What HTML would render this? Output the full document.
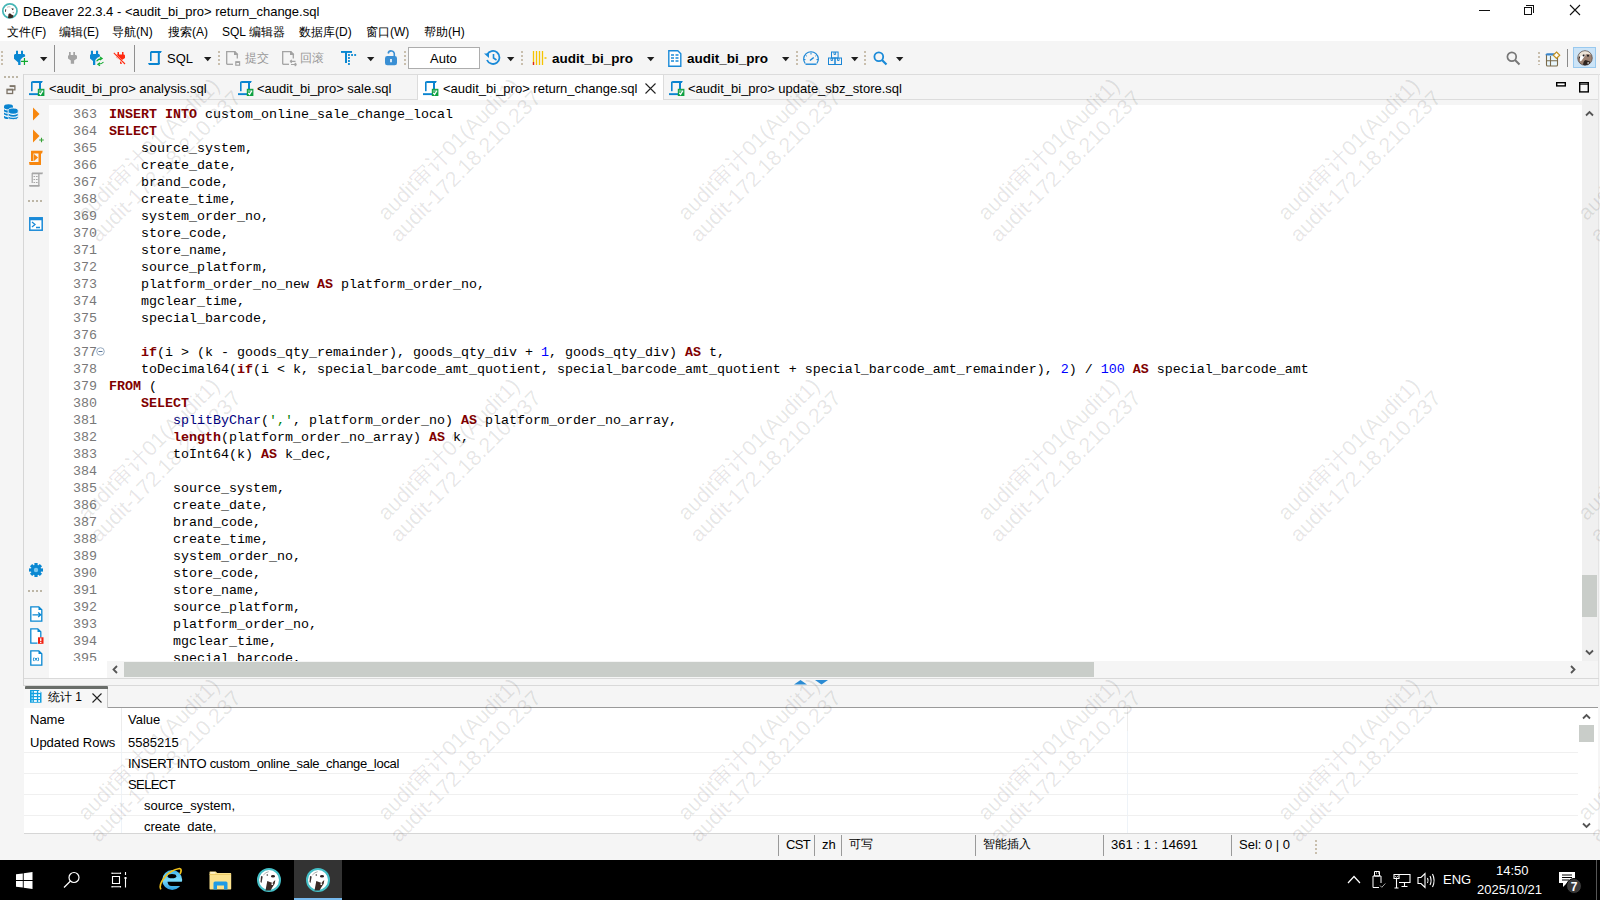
<!DOCTYPE html>
<html><head><meta charset="utf-8">
<style>
*{margin:0;padding:0;box-sizing:border-box}
html,body{width:1600px;height:900px;overflow:hidden;background:#fff;font-family:"Liberation Sans",sans-serif;font-size:12px;color:#000}
.a{position:absolute}
.t{position:absolute;white-space:pre;line-height:1}
svg{position:absolute;overflow:visible}
#code .l{position:absolute;left:0;height:17px;line-height:17px;white-space:pre;font-family:"Liberation Mono",monospace;font-size:13.33px;color:#000}
#code .n{position:absolute;left:0;width:97px;height:17px;line-height:17px;text-align:right;white-space:pre;font-family:"Liberation Mono",monospace;font-size:13.33px;color:#787878}
.k{color:#800000;font-weight:bold}
.f{color:#000080}
.s{color:#008000}
.d{color:#0000ff}
.grip{position:absolute;width:2px;background:repeating-linear-gradient(to bottom,#c9bfae 0 2px,transparent 2px 4px)}
.sep{position:absolute;width:1px;background:#8f8f8f}
.tri{position:absolute;width:0;height:0;border-left:4px solid transparent;border-right:4px solid transparent;border-top:4.5px solid #222}
</style></head><body>
<!-- title bar -->
<div class="a" style="left:0;top:0;width:1600px;height:41px;background:#fff"></div>
<!-- toolbar -->
<div class="a" style="left:0;top:41px;width:1600px;height:33px;background:#f5f5f5"></div>
<!-- main area bg -->
<div class="a" style="left:0;top:74px;width:1600px;height:786px;background:#f5f5f5"></div>

<!-- TITLE -->
<svg style="left:0px;top:1px" width="20" height="20" viewBox="0 0 20 20">
<circle cx="9.9" cy="9.9" r="7.1" fill="#fff" stroke="#47b6b6" stroke-width="1.7"/>
<path d="M8 17 L8.5 13 L10 12.2 L11.5 13.5 L13.5 14.5 L13 16.5 Q10.5 17.6 8 17z" fill="#3b2a22"/>
<path d="M11.3 7.3 L14 7.7 L12.6 9.2z" fill="#2e2420"/>
<path d="M5 8.5 L6.3 8.2 L5.8 11 L5.2 11z" fill="#4a3a34"/>
<path d="M7 6.3 Q9 5.3 10.5 6" stroke="#b8b0aa" stroke-width="0.8" fill="none"/>
<path d="M12.6 11.5 L13.8 10.8 L13.2 12.5z" fill="#6a5a54"/>
</svg>
<div class="t" style="left:23px;top:5px;font-size:13px">DBeaver 22.3.4 - &lt;audit_bi_pro&gt; return_change.sql</div>
<div class="a" style="left:1479px;top:10px;width:11px;height:1px;background:#111"></div>
<div class="a" style="left:1524px;top:7px;width:8px;height:8px;border:1px solid #111"></div>
<div class="a" style="left:1526px;top:5px;width:8px;height:8px;border-top:1px solid #111;border-right:1px solid #111"></div>
<svg style="left:1569px;top:4px" width="12" height="12" viewBox="0 0 12 12"><path d="M1 1L11 11M11 1L1 11" stroke="#111" stroke-width="1.1"/></svg>
<!-- MENU -->
<div class="t" style="left:7px;top:26px">文件(F)</div>
<div class="t" style="left:59px;top:26px">编辑(E)</div>
<div class="t" style="left:112px;top:26px">导航(N)</div>
<div class="t" style="left:168px;top:26px">搜索(A)</div>
<div class="t" style="left:222px;top:26px">SQL 编辑器</div>
<div class="t" style="left:299px;top:26px">数据库(D)</div>
<div class="t" style="left:366px;top:26px">窗口(W)</div>
<div class="t" style="left:424px;top:26px">帮助(H)</div>

<!-- TOOLBAR -->
<div class="grip" style="left:1px;top:51px;height:15px"></div>
<svg style="left:10px;top:46px" width="20" height="20" viewBox="0 0 20 20">
<path d="M6 4.8h2V8h3V4.8h2V8h1.2l0.9 0.9v1.6q-2.6 0.6-4.6 3.2V19H8.2v-2.6L4 12.8V8.9L4.9 8H6z" fill="#0a88d2"/>
<path d="M11 15.4h7M14.45 12v7" stroke="#10aa30" stroke-width="1.2"/>
</svg>
<svg style="left:40px;top:57px" width="8" height="5" viewBox="0 0 8 5"><path d="M0 0h7.4L3.7 4.2z" fill="#1e1e1e"/></svg>
<div class="sep" style="left:54px;top:45px;height:27px"></div>
<svg style="left:62px;top:46px" width="20" height="20" viewBox="0 0 20 20">
<path d="M7 6h1.7v3h2.6V6H13v3h1.1L15 9.9v2.6l-2.9 1.9v3.3H8.8v-3.3L6 12.5V9.9L6.9 9H7z" fill="#a3a3a3"/>
</svg>
<svg style="left:88px;top:46px" width="22" height="20" viewBox="0 0 22 20">
<path d="M2.9 4.8h2.1V8h3V4.8h2.1V8h0.9l0.9 1v1.5q-2.8 0.6-4.6 3.5V19H5v-4l-3-2.6V9L2.9 8z" fill="#0a88d2"/>
<path d="M8.6 15.2q1.5-2.5 5.5-2.6M12 11l2.2 1.5-2.2 1.6M15.5 16q-1.5 2-5.5 2.2M12 19.8l-2.2-1.6 2.2-1.5" stroke="#10aa30" stroke-width="1.1" fill="none"/>
</svg>
<svg style="left:112px;top:46px" width="20" height="20" viewBox="0 0 20 20">
<path d="M5.5 6h1.5v2.5h3V6h1.5v2.5h0.7l0.8 0.9V12l-3 2v3.7H8v-3.7L4 11.5V9.4L4.8 8.5h0.7z" fill="#ff2a10"/>
<path d="M2 7.5l10 10" stroke="#f7f7f7" stroke-width="2.2"/>
<path d="M1.8 6.8L13 18" stroke="#ff2a10" stroke-width="1.1"/>
</svg>
<div class="sep" style="left:134px;top:45px;height:27px"></div>
<svg style="left:148px;top:50px" width="16" height="16" viewBox="0 0 16 16" fill="#0a84d0">
<path d="M3 1h10.8l-1 1.9H3z"/><rect x="2" y="1.6" width="1.6" height="9.4"/><rect x="9.8" y="1.5" width="2" height="12.5"/><path d="M0 13h11.8v0.5q0 1.5-1.5 1.5H1z"/>
</svg>
<div class="t" style="left:167px;top:52px;font-size:13px">SQL</div>
<svg style="left:204px;top:57px" width="8" height="5" viewBox="0 0 8 5"><path d="M0 0h7.4L3.7 4.2z" fill="#1e1e1e"/></svg>
<div class="grip" style="left:218px;top:51px;height:15px"></div>
<svg style="left:222px;top:46px" width="20" height="20" viewBox="0 0 20 20">
<path d="M4.7 18.3V5.6h8v2.8h2.6v4" stroke="#a3a3a3" stroke-width="1.3" fill="none"/><path d="M4.7 18.3h6.3" stroke="#a3a3a3" stroke-width="1.3"/>
<path d="M12.3 5h0.8l3 3v0.9h-3.8z" fill="#a3a3a3"/>
<rect x="13.8" y="15.8" width="3.8" height="3.4" stroke="#a3a3a3" stroke-width="1.2" fill="none"/><path d="M13.8 16.3h3.8" stroke="#a3a3a3" stroke-width="1.4"/>
</svg>
<div class="t" style="left:245px;top:52px;font-size:12px;color:#999">提交</div>
<svg style="left:278px;top:46px" width="20" height="20" viewBox="0 0 20 20">
<path d="M4.7 18.3V5.6h8v2.8h2.6v4" stroke="#a3a3a3" stroke-width="1.3" fill="none"/><path d="M4.7 18.3h6.3" stroke="#a3a3a3" stroke-width="1.3"/>
<path d="M12.3 5h0.8l3 3v0.9h-3.8z" fill="#a3a3a3"/>
<path d="M12.5 15.4h5M12 15.4l1.8-1.5M12 15.4l1.8 1.5M13 18.5h5M18.5 18.5l-1.8-1.5M18.5 18.5l-1.8 1.5" stroke="#a3a3a3" stroke-width="1.1" fill="none"/>
</svg>
<div class="t" style="left:300px;top:52px;font-size:12px;color:#999">回滚</div>
<svg style="left:336px;top:46px" width="24" height="22" viewBox="0 0 24 22" fill="#0a88d2">
<rect x="5" y="5" width="11" height="1.9"/><rect x="9" y="5" width="2" height="12"/>
<rect x="12" y="8.1" width="1.9" height="1.8"/><rect x="15.1" y="8.1" width="1.9" height="1.8"/><rect x="18.2" y="8.1" width="1.9" height="1.8"/>
<rect x="12" y="11.1" width="1.9" height="1.8"/><rect x="12" y="14.1" width="1.9" height="1.8"/><rect x="12" y="17.1" width="1.9" height="1.8"/>
</svg>
<svg style="left:367px;top:57px" width="8" height="5" viewBox="0 0 8 5"><path d="M0 0h7.4L3.7 4.2z" fill="#1e1e1e"/></svg>
<svg style="left:384px;top:50px" width="14" height="16" viewBox="0 0 14 16">
<path d="M4.2 3.5A3 3 0 0 1 10.3 4.5V7" stroke="#3a8fd4" stroke-width="1.6" fill="none"/>
<rect x="1" y="6" width="12" height="9.2" rx="2.3" fill="#3a8fd4"/><path d="M7 9v3.3" stroke="#fff" stroke-width="1.6"/>
</svg>
<div class="grip" style="left:404px;top:51px;height:15px"></div>
<div class="a" style="left:408px;top:47px;width:72px;height:22px;background:#fff;border:1px solid #adadad"></div>
<div class="t" style="left:430px;top:52px;font-size:13px">Auto</div>
<svg style="left:484px;top:49px" width="17" height="17" viewBox="0 0 17 17">
<path d="M3.2 5.5A6.5 6.5 0 1 1 3 11" stroke="#1a8ad8" stroke-width="1.8" fill="none"/><path d="M0 4.5h5v4.5z" fill="#1a8ad8"/><path d="M9.5 5v4l3 2" stroke="#1a8ad8" stroke-width="1.6" fill="none"/>
</svg>
<svg style="left:507px;top:57px" width="8" height="5" viewBox="0 0 8 5"><path d="M0 0h7.4L3.7 4.2z" fill="#1e1e1e"/></svg>
<div class="grip" style="left:521px;top:51px;height:15px"></div>
<svg style="left:532px;top:50px" width="16" height="16" viewBox="0 0 16 16">
<path d="M1.5 1v14M4.5 1v14M7.5 1v14M10.5 1v14" stroke="#f5c400" stroke-width="1.3"/><path d="M1.5 12v3" stroke="#e02020" stroke-width="1.3"/><path d="M12.5 8h2" stroke="#f5c400" stroke-width="1.5"/>
</svg>
<div class="t" style="left:552px;top:52px;font-size:13.5px;font-weight:bold">audit_bi_pro</div>
<svg style="left:647px;top:57px" width="8" height="5" viewBox="0 0 8 5"><path d="M0 0h7.4L3.7 4.2z" fill="#1e1e1e"/></svg>
<svg style="left:668px;top:50px" width="14" height="17" viewBox="0 0 14 17">
<path d="M0.8 0.8h9l3 3v12.4H0.8z" stroke="#1a8ad8" stroke-width="1.4" fill="#fff"/><path d="M3 5h3M7.5 5h3M3 8h3M7.5 8h3M3 11h3M7.5 11h3" stroke="#1a8ad8" stroke-width="1.5"/>
</svg>
<div class="t" style="left:687px;top:52px;font-size:13.5px;font-weight:bold">audit_bi_pro</div>
<svg style="left:782px;top:57px" width="8" height="5" viewBox="0 0 8 5"><path d="M0 0h7.4L3.7 4.2z" fill="#1e1e1e"/></svg>
<div class="grip" style="left:796px;top:51px;height:15px"></div>
<svg style="left:802px;top:50px" width="18" height="16" viewBox="0 0 18 16">
<path d="M3.2 13.5A7.3 7.3 0 1 1 14.8 13.5" stroke="#1a86d6" stroke-width="1.2" fill="none"/>
<path d="M3.5 14.2h11" stroke="#1a86d6" stroke-width="1.4"/>
<path d="M9 2.5v2M3.5 5l1.3 1.2M14.5 5l-1.2 1.2M1.5 9.6h2M14.5 9.6h2" stroke="#1a86d6" stroke-width="1"/>
<path d="M8 10.5l3.7-3" stroke="#1a86d6" stroke-width="1.5"/>
</svg>
<svg style="left:827px;top:51px" width="16" height="15" viewBox="0 0 16 15">
<rect x="4.5" y="1" width="6.6" height="6" stroke="#1a86d6" stroke-width="1" fill="none"/>
<rect x="1.5" y="7" width="6.5" height="6.5" stroke="#1a86d6" stroke-width="1" fill="none"/>
<rect x="8" y="7" width="6.5" height="6.5" stroke="#1a86d6" stroke-width="1" fill="none"/>
<path d="M7 1v2.5h1.6V1M4 7v2.5h1.6V7M10.5 7v2.5h1.6V7" stroke="#1a86d6" stroke-width="0.9" fill="none"/>
</svg>
<svg style="left:851px;top:57px" width="8" height="5" viewBox="0 0 8 5"><path d="M0 0h7.4L3.7 4.2z" fill="#1e1e1e"/></svg>
<div class="grip" style="left:864px;top:51px;height:15px"></div>
<svg style="left:873px;top:51px" width="15" height="15" viewBox="0 0 15 15">
<circle cx="5.8" cy="5.8" r="4.4" stroke="#1a8ad8" stroke-width="1.8" fill="none"/><path d="M9 9l4.5 4.5" stroke="#1a8ad8" stroke-width="2.2"/>
</svg>
<svg style="left:896px;top:57px" width="8" height="5" viewBox="0 0 8 5"><path d="M0 0h7.4L3.7 4.2z" fill="#1e1e1e"/></svg>
<!-- right toolbar -->
<svg style="left:1506px;top:51px" width="15" height="15" viewBox="0 0 15 15">
<circle cx="5.8" cy="5.8" r="4.4" stroke="#777" stroke-width="1.7" fill="none"/><path d="M9 9l4.5 4.5" stroke="#777" stroke-width="1.9"/>
</svg>
<div class="grip" style="left:1538px;top:52px;height:13px"></div>
<svg style="left:1545px;top:51px" width="16" height="17" viewBox="0 0 16 17">
<rect x="1.5" y="3.5" width="11" height="11.5" rx="1" fill="#e8f6fc" stroke="#7a6a4a" stroke-width="1.1"/>
<path d="M1.5 4.3q0-1 1-1h8" stroke="#3a86cc" stroke-width="2.2" fill="none"/>
<path d="M5.5 5v10M1.5 9.7h11" stroke="#7a6a4a" stroke-width="1.1"/>
<path d="M11.5 1l3.2 3.2-3.2 3.2-3.2-3.2z" fill="#fff6d8" stroke="#c09020" stroke-width="1.2"/>
<path d="M11.5 2.5v3.4M9.8 4.2h3.4" stroke="#fff" stroke-width="0.8"/>
</svg>
<div class="sep" style="left:1567px;top:49px;height:18px;background:#8a8a8a"></div>
<div class="a" style="left:1573px;top:47px;width:23px;height:21px;background:#cce4f7;border:1px solid #99c9ef"></div>
<svg style="left:1577px;top:50px" width="16" height="16" viewBox="0 0 16 16">
<defs><clipPath id="avc"><circle cx="8" cy="8" r="7.3"/></clipPath></defs>
<g clip-path="url(#avc)">
<rect x="0" y="0" width="16" height="16" fill="#9c8272"/>
<path d="M0 0h16v5.5q-4-2.5-9-1L2 8 0 9z" fill="#ece4d8"/>
<path d="M3 7q2.5-3 6-2.5L5 10q-1 2-2 1z" fill="#fff"/>
<circle cx="6.6" cy="5.6" r="1" fill="#1a1a1a"/><circle cx="11" cy="5.8" r="1" fill="#1a1a1a"/>
<path d="M2 5.5l1.2 2.5-1.8 0.5z" fill="#2a2020"/>
<path d="M6 16q0-5 2.5-6l4.5 1.5L12 16z" fill="#2e241f"/>
<path d="M10.5 12.3h1.3v1.4h-1.3z" fill="#fff"/>
</g>
<circle cx="8" cy="8" r="7.3" fill="none" stroke="#3a3030" stroke-width="0.6"/>
</svg>

<!-- LEFT PANEL -->
<div class="a" style="left:23px;top:74px;width:1px;height:612px;background:#d6d6d6"></div>
<div class="a" style="left:4px;top:76px;width:14px;height:2px;background:repeating-linear-gradient(to right,#bdb6a6 0 2px,transparent 2px 4px)"></div>
<svg style="left:6px;top:85px" width="10" height="10" viewBox="0 0 10 10" fill="none" stroke="#7d7468">
<path d="M3.7 0.8h5.2v4h-2" stroke-width="1.3"/><path d="M3.7 1.3h5.2" stroke-width="1.5"/><rect x="1" y="4.3" width="5.6" height="4.2" stroke-width="1.3"/><path d="M1 4.8h5.6" stroke-width="1.5"/>
</svg>
<svg style="left:3px;top:103px" width="16" height="17" viewBox="0 0 16 17">
<path d="M1 3.5q0-2.2 4.5-2.2t4.5 2.2v11q0 1.5-4.5 1.5T1 14.5z" fill="#0a84d0"/>
<path d="M1 5.6q1.5 1.4 4.5 1.4M1 8.8q1.5 1.4 4.5 1.4M1 12q1.5 1.4 4.5 1.4" stroke="#fff" stroke-width="1.1" fill="none"/>
<path d="M5.2 7.5q0-2.5 5-2.5t5 2.5v7.3q0 1.9-5 1.9t-5-1.9z" fill="#0a84d0" stroke="#f5f5f5" stroke-width="0.9"/>
<path d="M5.5 9.9q1.5 1.5 4.7 1.5t4.8-1.5M5.5 12.8q1.5 1.5 4.7 1.5t4.8-1.5" stroke="#fff" stroke-width="1.1" fill="none"/>
</svg>
<!-- TAB STRIP -->
<div class="a" style="left:24px;top:74px;width:1576px;height:1px;background:#dcdcdc"></div>
<div class="a" style="left:24px;top:99px;width:1575px;height:1px;background:#dcdcdc"></div>
<div class="a" style="left:1598px;top:74px;width:1px;height:612px;background:#e4e4e4"></div>
<div class="a" style="left:417px;top:75px;width:247px;height:25px;background:#fff;border-left:1px solid #dcdcdc;border-right:1px solid #dcdcdc"></div>
<svg style="left:28px;top:80px" width="17" height="17" viewBox="0 0 17 17" fill="#0a84d0">
<path d="M4.2 1h10.6l-1 1.9H4.2z"/><rect x="3" y="1.6" width="1.6" height="9.6"/><rect x="11" y="1.5" width="2" height="8"/><rect x="1" y="13.2" width="9" height="1.9"/>
<rect x="9.8" y="8.8" width="6.6" height="7.2" fill="#0ea040"/><rect x="10.8" y="9.8" width="4.6" height="2.6" fill="#5cbf80"/><path d="M11.3 13l1.3 1.4 2.2-3.6" stroke="#fff" stroke-width="1.2" fill="none"/>
</svg>
<div class="t" style="left:49px;top:82px;font-size:13px">&lt;audit_bi_pro&gt; analysis.sql</div>
<svg style="left:237px;top:80px" width="17" height="17" viewBox="0 0 17 17" fill="#0a84d0">
<path d="M4.2 1h10.6l-1 1.9H4.2z"/><rect x="3" y="1.6" width="1.6" height="9.6"/><rect x="11" y="1.5" width="2" height="8"/><rect x="1" y="13.2" width="9" height="1.9"/>
<rect x="9.8" y="8.8" width="6.6" height="7.2" fill="#0ea040"/><rect x="10.8" y="9.8" width="4.6" height="2.6" fill="#5cbf80"/><path d="M11.3 13l1.3 1.4 2.2-3.6" stroke="#fff" stroke-width="1.2" fill="none"/>
</svg>
<div class="t" style="left:257px;top:82px;font-size:13px">&lt;audit_bi_pro&gt; sale.sql</div>
<svg style="left:422px;top:80px" width="17" height="17" viewBox="0 0 17 17" fill="#0a84d0">
<path d="M4.2 1h10.6l-1 1.9H4.2z"/><rect x="3" y="1.6" width="1.6" height="9.6"/><rect x="11" y="1.5" width="2" height="8"/><rect x="1" y="13.2" width="9" height="1.9"/>
<rect x="9.8" y="8.8" width="6.6" height="7.2" fill="#0ea040"/><rect x="10.8" y="9.8" width="4.6" height="2.6" fill="#5cbf80"/><path d="M11.3 13l1.3 1.4 2.2-3.6" stroke="#fff" stroke-width="1.2" fill="none"/>
</svg>
<div class="t" style="left:443px;top:82px;font-size:13px">&lt;audit_bi_pro&gt; return_change.sql</div>
<svg style="left:645px;top:83px" width="11" height="11" viewBox="0 0 11 11"><path d="M0.5 0.5L10.5 10.5M10.5 0.5L0.5 10.5" stroke="#222" stroke-width="1.1"/></svg>
<svg style="left:668px;top:80px" width="17" height="17" viewBox="0 0 17 17" fill="#0a84d0">
<path d="M4.2 1h10.6l-1 1.9H4.2z"/><rect x="3" y="1.6" width="1.6" height="9.6"/><rect x="11" y="1.5" width="2" height="8"/><rect x="1" y="13.2" width="9" height="1.9"/>
<rect x="9.8" y="8.8" width="6.6" height="7.2" fill="#0ea040"/><rect x="10.8" y="9.8" width="4.6" height="2.6" fill="#5cbf80"/><path d="M11.3 13l1.3 1.4 2.2-3.6" stroke="#fff" stroke-width="1.2" fill="none"/>
</svg>
<div class="t" style="left:688px;top:82px;font-size:13px">&lt;audit_bi_pro&gt; update_sbz_store.sql</div>
<svg style="left:1555px;top:81px" width="12" height="7" viewBox="0 0 12 7"><rect x="1.7" y="1.7" width="8.6" height="3.2" stroke="#000" stroke-width="1.4" fill="#fff"/></svg>
<svg style="left:1578px;top:81px" width="12" height="13" viewBox="0 0 12 13"><rect x="1.7" y="1.7" width="8.6" height="9.2" stroke="#000" stroke-width="1.4" fill="#f5f5f5"/><path d="M1.7 3.2h8.6" stroke="#000" stroke-width="1"/></svg>
<!-- EDITOR -->
<div class="a" style="left:49px;top:105px;width:1533px;height:572px;background:#fff"></div>
<div class="a" style="left:24px;top:100px;width:25px;height:578px;background:#f5f5f5"></div>
<div id="code" class="a" style="left:0;top:106px;width:1582px;height:555px;overflow:hidden">
<div class="n" style="top:0px">363</div><div class="l" style="left:109px;top:0px"><span class="k">INSERT</span> <span class="k">INTO</span> custom_online_sale_change_local</div>
<div class="n" style="top:17px">364</div><div class="l" style="left:109px;top:17px"><span class="k">SELECT</span></div>
<div class="n" style="top:34px">365</div><div class="l" style="left:109px;top:34px">    source_system,</div>
<div class="n" style="top:51px">366</div><div class="l" style="left:109px;top:51px">    create_date,</div>
<div class="n" style="top:68px">367</div><div class="l" style="left:109px;top:68px">    brand_code,</div>
<div class="n" style="top:85px">368</div><div class="l" style="left:109px;top:85px">    create_time,</div>
<div class="n" style="top:102px">369</div><div class="l" style="left:109px;top:102px">    system_order_no,</div>
<div class="n" style="top:119px">370</div><div class="l" style="left:109px;top:119px">    store_code,</div>
<div class="n" style="top:136px">371</div><div class="l" style="left:109px;top:136px">    store_name,</div>
<div class="n" style="top:153px">372</div><div class="l" style="left:109px;top:153px">    source_platform,</div>
<div class="n" style="top:170px">373</div><div class="l" style="left:109px;top:170px">    platform_order_no_new <span class="k">AS</span> platform_order_no,</div>
<div class="n" style="top:187px">374</div><div class="l" style="left:109px;top:187px">    mgclear_time,</div>
<div class="n" style="top:204px">375</div><div class="l" style="left:109px;top:204px">    special_barcode,</div>
<div class="n" style="top:221px">376</div><div class="l" style="left:109px;top:221px"></div>
<div class="n" style="top:238px">377</div><div class="l" style="left:109px;top:238px">    <span class="k">if</span>(i &gt; (k - goods_qty_remainder), goods_qty_div + <span class="d">1</span>, goods_qty_div) <span class="k">AS</span> t,</div>
<div class="n" style="top:255px">378</div><div class="l" style="left:109px;top:255px">    toDecimal64(<span class="k">if</span>(i &lt; k, special_barcode_amt_quotient, special_barcode_amt_quotient + special_barcode_amt_remainder), <span class="d">2</span>) / <span class="d">100</span> <span class="k">AS</span> special_barcode_amt</div>
<div class="n" style="top:272px">379</div><div class="l" style="left:109px;top:272px"><span class="k">FROM</span> (</div>
<div class="n" style="top:289px">380</div><div class="l" style="left:109px;top:289px">    <span class="k">SELECT</span></div>
<div class="n" style="top:306px">381</div><div class="l" style="left:109px;top:306px">        <span class="f">splitByChar</span>(<span class="s">','</span>, platform_order_no) <span class="k">AS</span> platform_order_no_array,</div>
<div class="n" style="top:323px">382</div><div class="l" style="left:109px;top:323px">        <span class="k">length</span>(platform_order_no_array) <span class="k">AS</span> k,</div>
<div class="n" style="top:340px">383</div><div class="l" style="left:109px;top:340px">        toInt64(k) <span class="k">AS</span> k_dec,</div>
<div class="n" style="top:357px">384</div><div class="l" style="left:109px;top:357px"></div>
<div class="n" style="top:374px">385</div><div class="l" style="left:109px;top:374px">        source_system,</div>
<div class="n" style="top:391px">386</div><div class="l" style="left:109px;top:391px">        create_date,</div>
<div class="n" style="top:408px">387</div><div class="l" style="left:109px;top:408px">        brand_code,</div>
<div class="n" style="top:425px">388</div><div class="l" style="left:109px;top:425px">        create_time,</div>
<div class="n" style="top:442px">389</div><div class="l" style="left:109px;top:442px">        system_order_no,</div>
<div class="n" style="top:459px">390</div><div class="l" style="left:109px;top:459px">        store_code,</div>
<div class="n" style="top:476px">391</div><div class="l" style="left:109px;top:476px">        store_name,</div>
<div class="n" style="top:493px">392</div><div class="l" style="left:109px;top:493px">        source_platform,</div>
<div class="n" style="top:510px">393</div><div class="l" style="left:109px;top:510px">        platform_order_no,</div>
<div class="n" style="top:527px">394</div><div class="l" style="left:109px;top:527px">        mgclear_time,</div>
<div class="n" style="top:544px">395</div><div class="l" style="left:109px;top:544px">        special_barcode,</div>
</div>
<svg style="left:96px;top:347px" width="9" height="9" viewBox="0 0 9 9"><circle cx="4.5" cy="4.5" r="3.8" stroke="#8aa0b8" fill="#fff" stroke-width="0.9"/><path d="M2.5 4.5h4" stroke="#4a6a90" stroke-width="0.9"/></svg>

<!-- EDITOR LEFT RULER ICONS -->
<svg style="left:32px;top:107px" width="8" height="14" viewBox="0 0 8 14"><path d="M1 0.5L7.5 7 1 13.5z" fill="#f7870f"/></svg>
<svg style="left:32px;top:129px" width="12" height="14" viewBox="0 0 12 14"><path d="M1 0.5L7.5 7 1 13.5z" fill="#f7870f"/><path d="M7.2 11h4.6M9.5 8.7v4.6" stroke="#3aa33a" stroke-width="1.1"/></svg>
<svg style="left:28px;top:150px" width="16" height="16" viewBox="0 0 16 16" fill="#f7870f">
<path d="M3.2 0.8h11.5l-0.6 2.8H3.2z"/><rect x="3" y="1" width="2.5" height="10"/><rect x="10.5" y="1" width="2.5" height="13.5"/><path d="M1 12h10.5l1.5 2.5v0.5H1.5z"/><path d="M6 4l4 3.5-4 3.5z"/>
</svg>
<svg style="left:28px;top:172px" width="16" height="16" viewBox="0 0 16 16" fill="#a6a6a6">
<path d="M4 0.6h11l-0.6 1.6H4z"/><rect x="3.6" y="1" width="1.2" height="10"/><rect x="10.2" y="1" width="1.3" height="13"/><path d="M1 13h10.5v1.8H1.5z"/>
<rect x="5.5" y="4" width="1.6" height="1"/><rect x="8" y="4" width="1.6" height="1"/><rect x="5.5" y="7" width="1.6" height="1"/><rect x="8" y="7" width="1.6" height="1"/><rect x="5.5" y="10" width="1.6" height="1"/><rect x="8" y="10" width="1.6" height="1"/>
</svg>
<div class="a" style="left:28px;top:200px;width:14px;height:2px;background:repeating-linear-gradient(to right,#bdb6a6 0 2px,transparent 2px 4px)"></div>
<svg style="left:29px;top:217px" width="14" height="14" viewBox="0 0 14 14"><rect x="0.8" y="0.8" width="12.4" height="12.4" stroke="#1a8ad8" stroke-width="1.5" fill="#fff"/><path d="M0.8 2h12.4" stroke="#1a8ad8" stroke-width="2.5"/><path d="M3 5l3 2.5-3 2.5M7 10.5h4" stroke="#1a8ad8" stroke-width="1.3" fill="none"/></svg>
<svg style="left:28px;top:562px" width="16" height="16" viewBox="-8 -8 16 16" fill="#0a88d2">
<rect x="-1.6" y="-7" width="3.2" height="3" transform="rotate(0)"/><rect x="-1.6" y="-7" width="3.2" height="3" transform="rotate(45)"/><rect x="-1.6" y="-7" width="3.2" height="3" transform="rotate(90)"/><rect x="-1.6" y="-7" width="3.2" height="3" transform="rotate(135)"/><rect x="-1.6" y="-7" width="3.2" height="3" transform="rotate(180)"/><rect x="-1.6" y="-7" width="3.2" height="3" transform="rotate(225)"/><rect x="-1.6" y="-7" width="3.2" height="3" transform="rotate(270)"/><rect x="-1.6" y="-7" width="3.2" height="3" transform="rotate(315)"/><circle r="5.2"/><circle r="2.2" fill="#7cc8f0"/>
</svg>
<div class="a" style="left:28px;top:590px;width:14px;height:2px;background:repeating-linear-gradient(to right,#bdb6a6 0 2px,transparent 2px 4px)"></div>
<svg style="left:30px;top:606px" width="14" height="16" viewBox="0 0 14 16">
<path d="M0.8 0.8h8l3 3v11.4H0.8z" stroke="#0a88d2" stroke-width="1.3" fill="#fff"/><path d="M8.5 0.8v3.3h3.3z" fill="#0a88d2"/><path d="M2.5 8.8h8M8.2 6.5l2.5 2.3-2.5 2.3" stroke="#0a88d2" stroke-width="1.3" fill="none"/>
</svg>
<svg style="left:30px;top:628px" width="14" height="16" viewBox="0 0 14 16">
<path d="M7.5 15.2H0.8V0.8h7l3 3V9" stroke="#0a88d2" stroke-width="1.3" fill="#fff"/><path d="M7.5 0.8v3.3h3.3z" fill="#0a88d2"/><rect x="8" y="9.3" width="5.5" height="6.5" fill="#f02010"/><path d="M10.75 10.3v2.6M10.75 13.7v1.2" stroke="#fff" stroke-width="1.3"/>
</svg>
<svg style="left:30px;top:650px" width="14" height="16" viewBox="0 0 14 16">
<path d="M0.8 0.8h8l3 3v11.4H0.8z" stroke="#0a88d2" stroke-width="1.3" fill="#fff"/><path d="M8.5 0.8v3.3h3.3z" fill="#0a88d2"/>
<path d="M4 7.5q-1.2 1.8 0 3.6M8 7.5q1.2 1.8 0 3.6M5 8l2 2.6M7 8l-2 2.6" stroke="#0a88d2" stroke-width="1" fill="none"/>
</svg>
<!-- fold column white strip left of h-scroll -->
<div class="a" style="left:49px;top:661px;width:58px;height:17px;background:#fff"></div>
<!-- V SCROLL -->
<div class="a" style="left:1582px;top:100px;width:16px;height:562px;background:#f0f0f0"></div>
<svg style="left:1585px;top:109px" width="9" height="9" viewBox="0 0 9 9"><path d="M1 6.5L4.5 3 8 6.5" stroke="#555" stroke-width="1.8" fill="none"/></svg>
<svg style="left:1585px;top:648px" width="9" height="9" viewBox="0 0 9 9"><path d="M1 2.5L4.5 6 8 2.5" stroke="#555" stroke-width="1.8" fill="none"/></svg>
<div class="a" style="left:1582px;top:575px;width:15px;height:42px;background:#c9cdc9"></div>
<!-- H SCROLL -->
<div class="a" style="left:107px;top:661px;width:1491px;height:17px;background:#f5f5f5"></div>
<svg style="left:111px;top:665px" width="9" height="9" viewBox="0 0 9 9"><path d="M6 1L2.5 4.5 6 8" stroke="#555" stroke-width="1.8" fill="none"/></svg>
<svg style="left:1568px;top:665px" width="9" height="9" viewBox="0 0 9 9"><path d="M3 1L6.5 4.5 3 8" stroke="#555" stroke-width="1.8" fill="none"/></svg>
<div class="a" style="left:124px;top:662px;width:970px;height:15px;background:#c9cdc9"></div>
<!-- SASH -->
<div class="a" style="left:24px;top:678px;width:1575px;height:1px;background:#d9d9d9"></div>
<div class="a" style="left:24px;top:685px;width:1575px;height:1px;background:#d9d9d9"></div>
<svg style="left:794px;top:680px" width="34" height="5" viewBox="0 0 34 5"><path d="M0 4.5L6.5 0 13 4.5z" fill="#2b8bd3"/><path d="M21 0h13L27.5 4.5z" fill="#2b8bd3"/></svg>
<!-- RESULTS -->
<div class="a" style="left:24px;top:687px;width:84px;height:21px;background:#f7f7f7;border-right:1px solid #c8c8c8"></div>
<div class="a" style="left:25px;top:686px;width:83px;height:3px;background:#6a6e6a;border-radius:1px 1px 0 0"></div>
<div class="a" style="left:108px;top:707px;width:1490px;height:1px;background:#9a9a9a"></div>
<svg style="left:30px;top:690px" width="12" height="13" viewBox="0 0 12 13"><path d="M0 0h9l2.5 2.5V12.8H0z" fill="#14a0e0"/><path d="M9 0v2.5h2.5" fill="#fff"/><rect x="1.4" y="1" width="1.6" height="1.8" fill="#86d4f2"/><rect x="3.9" y="1" width="3" height="1.8" fill="#fff"/><rect x="8.2" y="1" width="1.8" height="1.8" fill="#fff"/><rect x="1.4" y="4.2" width="1.6" height="1.8" fill="#86d4f2"/><rect x="3.9" y="4.2" width="3" height="1.8" fill="#fff"/><rect x="8.2" y="4.2" width="1.8" height="1.8" fill="#fff"/><rect x="1.4" y="7.2" width="1.6" height="1.8" fill="#86d4f2"/><rect x="3.9" y="7.2" width="3" height="1.8" fill="#fff"/><rect x="8.2" y="7.2" width="1.8" height="1.8" fill="#fff"/><rect x="1.4" y="10.1" width="1.6" height="1.8" fill="#86d4f2"/><rect x="3.9" y="10.1" width="3" height="1.8" fill="#fff"/><rect x="8.2" y="10.1" width="1.8" height="1.8" fill="#fff"/></svg>
<div class="t" style="left:48px;top:691px;font-size:12px">统计 1</div>
<svg style="left:92px;top:693px" width="10" height="10" viewBox="0 0 10 10"><path d="M0.5 0.5L9.5 9.5M9.5 0.5L0.5 9.5" stroke="#222" stroke-width="1.1"/></svg>
<div class="a" style="left:24px;top:708px;width:1554px;height:125px;background:#fff"></div>
<div class="a" style="left:1578px;top:708px;width:20px;height:125px;background:#fff"></div>
<div class="a" style="left:121px;top:708px;width:1px;height:125px;background:#eef3f8"></div>
<div class="a" style="left:1127px;top:708px;width:1px;height:125px;background:#eef3f8"></div>
<div class="a" style="left:121px;top:708px;width:1px;height:23px;background:#ececec"></div>
<div class="a" style="left:1127px;top:708px;width:1px;height:23px;background:#ececec"></div>
<div class="a" style="left:24px;top:752px;width:1554px;height:1px;background:#f0f0f0"></div>
<div class="a" style="left:24px;top:773px;width:1554px;height:1px;background:#f0f0f0"></div>
<div class="a" style="left:24px;top:794px;width:1554px;height:1px;background:#f0f0f0"></div>
<div class="a" style="left:24px;top:815px;width:1554px;height:1px;background:#f0f0f0"></div>
<div class="t" style="left:30px;top:713px;font-size:13px">Name</div>
<div class="t" style="left:128px;top:713px;font-size:13px">Value</div>
<div class="t" style="left:30px;top:736px;font-size:13px">Updated Rows</div>
<div class="t" style="left:128px;top:736px;font-size:13px">5585215</div>
<div class="t" style="left:128px;top:757px;font-size:13px;letter-spacing:-0.3px">INSERT INTO custom_online_sale_change_local</div>
<div class="t" style="left:128px;top:778px;font-size:13px;letter-spacing:-0.6px">SELECT</div>
<div class="t" style="left:144px;top:799px;font-size:13px">source_system,</div>
<div class="t" style="left:144px;top:820px;font-size:13px">create_date,</div>
<svg style="left:1582px;top:712px" width="9" height="9" viewBox="0 0 9 9"><path d="M1 6.5L4.5 3 8 6.5" stroke="#555" stroke-width="1.8" fill="none"/></svg>
<svg style="left:1582px;top:821px" width="9" height="9" viewBox="0 0 9 9"><path d="M1 2.5L4.5 6 8 2.5" stroke="#555" stroke-width="1.8" fill="none"/></svg>
<div class="a" style="left:1579px;top:725px;width:15px;height:17px;background:#c9cdc9"></div>
<div class="a" style="left:24px;top:833px;width:1575px;height:1px;background:#d6d6d6"></div>
<!-- STATUS BAR -->
<div class="sep" style="left:778px;top:835px;height:21px;background:#9a9a9a"></div>
<div class="sep" style="left:814px;top:835px;height:21px;background:#9a9a9a"></div>
<div class="sep" style="left:841px;top:835px;height:21px;background:#9a9a9a"></div>
<div class="sep" style="left:975px;top:835px;height:21px;background:#9a9a9a"></div>
<div class="sep" style="left:1103px;top:835px;height:21px;background:#9a9a9a"></div>
<div class="sep" style="left:1231px;top:835px;height:21px;background:#9a9a9a"></div>
<div class="t" style="left:786px;top:838px;font-size:13px;letter-spacing:-0.7px">CST</div>
<div class="t" style="left:822px;top:838px;font-size:13px">zh</div>
<div class="t" style="left:849px;top:838px;font-size:12px">可写</div>
<div class="t" style="left:983px;top:838px;font-size:12px">智能插入</div>
<div class="t" style="left:1111px;top:838px;font-size:13px">361 : 1 : 14691</div>
<div class="t" style="left:1239px;top:838px;font-size:13px">Sel: 0 | 0</div>
<div class="grip" style="left:1315px;top:840px;height:14px"></div>
<!-- taskbar -->
<div class="a" style="left:0;top:860px;width:1600px;height:40px;background:#000"></div>

<svg id="wm" style="left:0;top:0;pointer-events:none" width="1600" height="900" viewBox="0 0 1600 900"><g fill="#000" fill-opacity="0.1" font-family="Liberation Sans" font-size="21.5" text-anchor="middle"><g transform="translate(85 223) rotate(-45)"><text x="97" y="0">audit审计01(Audit1)</text><text x="97" y="24">audit-172.18.210.237</text></g><g transform="translate(385 223) rotate(-45)"><text x="97" y="0">audit审计01(Audit1)</text><text x="97" y="24">audit-172.18.210.237</text></g><g transform="translate(685 223) rotate(-45)"><text x="97" y="0">audit审计01(Audit1)</text><text x="97" y="24">audit-172.18.210.237</text></g><g transform="translate(985 223) rotate(-45)"><text x="97" y="0">audit审计01(Audit1)</text><text x="97" y="24">audit-172.18.210.237</text></g><g transform="translate(1285 223) rotate(-45)"><text x="97" y="0">audit审计01(Audit1)</text><text x="97" y="24">audit-172.18.210.237</text></g><g transform="translate(1585 223) rotate(-45)"><text x="97" y="0">audit审计01(Audit1)</text><text x="97" y="24">audit-172.18.210.237</text></g><g transform="translate(85 523) rotate(-45)"><text x="97" y="0">audit审计01(Audit1)</text><text x="97" y="24">audit-172.18.210.237</text></g><g transform="translate(385 523) rotate(-45)"><text x="97" y="0">audit审计01(Audit1)</text><text x="97" y="24">audit-172.18.210.237</text></g><g transform="translate(685 523) rotate(-45)"><text x="97" y="0">audit审计01(Audit1)</text><text x="97" y="24">audit-172.18.210.237</text></g><g transform="translate(985 523) rotate(-45)"><text x="97" y="0">audit审计01(Audit1)</text><text x="97" y="24">audit-172.18.210.237</text></g><g transform="translate(1285 523) rotate(-45)"><text x="97" y="0">audit审计01(Audit1)</text><text x="97" y="24">audit-172.18.210.237</text></g><g transform="translate(1585 523) rotate(-45)"><text x="97" y="0">audit审计01(Audit1)</text><text x="97" y="24">audit-172.18.210.237</text></g><g transform="translate(85 823) rotate(-45)"><text x="97" y="0">audit审计01(Audit1)</text><text x="97" y="24">audit-172.18.210.237</text></g><g transform="translate(385 823) rotate(-45)"><text x="97" y="0">audit审计01(Audit1)</text><text x="97" y="24">audit-172.18.210.237</text></g><g transform="translate(685 823) rotate(-45)"><text x="97" y="0">audit审计01(Audit1)</text><text x="97" y="24">audit-172.18.210.237</text></g><g transform="translate(985 823) rotate(-45)"><text x="97" y="0">audit审计01(Audit1)</text><text x="97" y="24">audit-172.18.210.237</text></g><g transform="translate(1285 823) rotate(-45)"><text x="97" y="0">audit审计01(Audit1)</text><text x="97" y="24">audit-172.18.210.237</text></g><g transform="translate(1585 823) rotate(-45)"><text x="97" y="0">audit审计01(Audit1)</text><text x="97" y="24">audit-172.18.210.237</text></g></g></svg>
<!-- TASKBAR ICONS -->
<svg style="left:16px;top:872px" width="17" height="17" viewBox="0 0 17 17"><path d="M0 2.3l6.8-.9v6.6H0zM7.7 1.3L16.5 0v8H7.7zM0 8.9h6.8v6.7L0 14.7zM7.7 8.9h8.8V17l-8.8-1.2z" fill="#fff"/></svg>
<svg style="left:63px;top:871px" width="18" height="18" viewBox="0 0 18 18"><circle cx="11" cy="6.5" r="5" stroke="#fff" stroke-width="1.2" fill="none"/><path d="M7.5 10L1 16.5" stroke="#fff" stroke-width="1.3"/></svg>
<svg style="left:111px;top:872px" width="18" height="16" viewBox="0 0 18 16"><path d="M1 0.5v1.5M9.5 0.5v1.5M1 1.3h8.5M1.5 4.5h7v7h-7zM1 14v1.5M9.5 14v1.5M1 14.7h8.5M14.5 0v3M14.5 5v10.5" stroke="#fff" stroke-width="1.1" fill="none"/><rect x="13.5" y="5" width="2" height="2" fill="#fff"/></svg>
<svg style="left:156px;top:864px" width="30" height="30" viewBox="0 0 30 30">
<defs><linearGradient id="ieg" x1="0" y1="0" x2="0" y2="1"><stop offset="0" stop-color="#3fb4ec"/><stop offset="0.5" stop-color="#7cdcfa"/><stop offset="1" stop-color="#2a9ee0"/></linearGradient></defs>
<circle cx="16.2" cy="16" r="10" fill="url(#ieg)"/>
<ellipse cx="16" cy="12.2" rx="4.3" ry="2.1" fill="#000"/>
<path d="M11.5 17.8H27V22H15.5Q12 22 11.5 17.8z" fill="#000"/>
<path d="M4.8 25.3Q2.5 21 8.5 13.5T23.5 4.5Q26.5 5 24 10" stroke="#f2c21c" stroke-width="1.7" fill="none"/>
</svg>
<svg style="left:209px;top:871px" width="23" height="19" viewBox="0 0 23 19"><path d="M0.5 1.2q0-0.7 0.7-0.7h5.5l1.5 1.5h13.3q0.7 0 0.7 0.7v15.1q0 0.7-0.7 0.7H1.2q-0.7 0-0.7-0.7z" fill="#fbe28e"/><path d="M0.5 3.5h21.5" stroke="#e9c760" stroke-width="0.8"/><rect x="1.5" y="1.2" width="4.5" height="1.3" fill="#fff" opacity="0.7"/><path d="M4.5 18.5V12q0-1.5 1.5-1.5h11q1.5 0 1.5 1.5v6.5h-3.5v-4h-7v4z" fill="#1e9be6"/></svg>
<svg style="left:254px;top:865px" width="30" height="30" viewBox="0 0 30 30">
<circle cx="15" cy="15" r="11" fill="#fff" stroke="#45c0c8" stroke-width="2"/>
<ellipse cx="19" cy="11.2" rx="2" ry="1.3" fill="#2a2220"/>
<circle cx="13.3" cy="10" r="0.8" fill="#333"/>
<path d="M7 11L8.7 11.5 7.5 18 6.5 17z" fill="#3a3030"/>
<path d="M11.5 25.5L13.3 16 18.7 18 20 16 21.3 15.3 20.7 18.7 18.7 21.7 16.5 25.5z" fill="#3a2a25"/>
<rect x="17.5" y="18.3" width="1.6" height="1.7" fill="#fff"/>
<path d="M9.3 10Q12 7 14.7 6.7" stroke="#999" stroke-width="0.8" fill="none"/>
</svg>
<div class="a" style="left:294px;top:860px;width:48px;height:40px;background:#333"></div>
<div class="a" style="left:294px;top:898px;width:48px;height:2px;background:#76b9ed"></div>
<svg style="left:303px;top:865px" width="30" height="30" viewBox="0 0 30 30">
<circle cx="15" cy="15" r="11" fill="#fff" stroke="#45c0c8" stroke-width="2"/>
<ellipse cx="19" cy="11.2" rx="2" ry="1.3" fill="#2a2220"/>
<circle cx="13.3" cy="10" r="0.8" fill="#333"/>
<path d="M7 11L8.7 11.5 7.5 18 6.5 17z" fill="#3a3030"/>
<path d="M11.5 25.5L13.3 16 18.7 18 20 16 21.3 15.3 20.7 18.7 18.7 21.7 16.5 25.5z" fill="#3a2a25"/>
<rect x="17.5" y="18.3" width="1.6" height="1.7" fill="#fff"/>
<path d="M9.3 10Q12 7 14.7 6.7" stroke="#999" stroke-width="0.8" fill="none"/>
</svg>
<svg style="left:1347px;top:875px" width="14" height="9" viewBox="0 0 14 9"><path d="M1 8l6-6.5L13 8" stroke="#fff" stroke-width="1.2" fill="none"/></svg>
<svg style="left:1372px;top:871px" width="16" height="18" viewBox="0 0 16 18"><path d="M2.5 0.5h5v4.5h-5z" stroke="#fff" stroke-width="1" fill="none"/><path d="M4 2h1M6 2h1" stroke="#fff" stroke-width="1"/><path d="M1 16.5V5h8v7" stroke="#fff" stroke-width="1" fill="none"/><path d="M1 16.5h6" stroke="#fff" stroke-width="1"/><path d="M8 14.5l1.8 1.8 3.5-3.8" stroke="#bbb" stroke-width="0.9" fill="none"/></svg>
<svg style="left:1393px;top:873px" width="18" height="16" viewBox="0 0 18 16"><path d="M4.5 1.5h12.5v8h-11M1 1.5h5v4h-5zM3.5 5.5V15M1.5 15h4M8.5 13.5h6M11.5 9.5v4" stroke="#fff" stroke-width="1.1" fill="none"/><path d="M2 3l1.5 1.3L5 3" stroke="#fff" stroke-width="0.8" fill="none"/></svg>
<svg style="left:1417px;top:872px" width="18" height="17" viewBox="0 0 18 17"><path d="M1 5.5h3l4-4v14l-4-4H1z" stroke="#fff" stroke-width="1.1" fill="none"/><path d="M10.5 6q1.2 2.5 0 5M13 4q2.2 4.5 0 9M15.5 2q3.2 6.5 0 13" stroke="#fff" stroke-width="1.1" fill="none"/></svg>
<div class="t" style="left:1443px;top:873px;font-size:13px;color:#fff">ENG</div>
<div class="t" style="left:1496px;top:864px;font-size:13px;color:#fff">14:50</div>
<div class="t" style="left:1477px;top:883px;font-size:13px;color:#fff">2025/10/21</div>
<svg style="left:1558px;top:871px" width="26" height="24" viewBox="0 0 26 24"><path d="M1 1h16v11h-8l-4 4v-4H1z" fill="#fff"/><path d="M4 4h10M4 6.5h10M4 9h7" stroke="#000" stroke-width="1"/><circle cx="16" cy="15" r="7.5" fill="#3a3a3a" stroke="#000" stroke-width="1"/><text x="16" y="19.5" font-size="12" font-weight="bold" fill="#fff" text-anchor="middle" font-family="Liberation Sans">7</text></svg>
<div class="a" style="left:1596px;top:860px;width:1px;height:40px;background:#555"></div>
</body></html>
